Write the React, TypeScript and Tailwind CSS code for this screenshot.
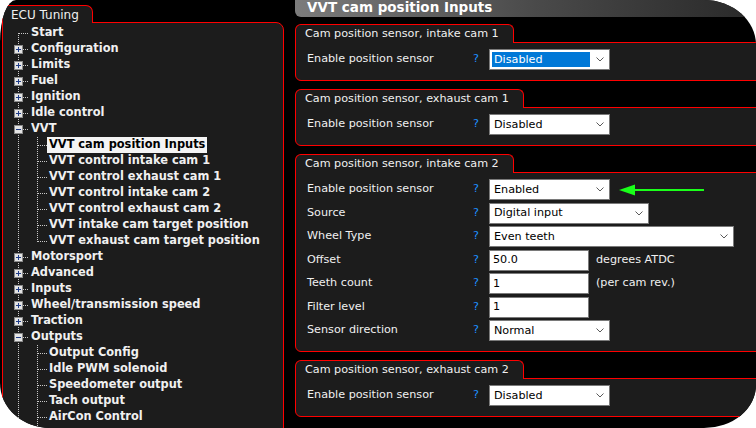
import React from "react";

type TreeNode = {
  label: string;
  level: 0 | 1;
  kind: "plus" | "minus" | "leaf";
  first?: boolean;
  last?: boolean;
  selected?: boolean;
};

const tree: TreeNode[] = [
  { label: "Start", level: 0, kind: "leaf", first: true },
  { label: "Configuration", level: 0, kind: "plus" },
  { label: "Limits", level: 0, kind: "plus" },
  { label: "Fuel", level: 0, kind: "plus" },
  { label: "Ignition", level: 0, kind: "plus" },
  { label: "Idle control", level: 0, kind: "plus" },
  { label: "VVT", level: 0, kind: "minus" },
  { label: "VVT cam position Inputs", level: 1, kind: "leaf", selected: true },
  { label: "VVT control intake cam 1", level: 1, kind: "leaf" },
  { label: "VVT control exhaust cam 1", level: 1, kind: "leaf" },
  { label: "VVT control intake cam 2", level: 1, kind: "leaf" },
  { label: "VVT control exhaust cam 2", level: 1, kind: "leaf" },
  { label: "VVT intake cam target position", level: 1, kind: "leaf" },
  { label: "VVT exhaust cam target position", level: 1, kind: "leaf", last: true },
  { label: "Motorsport", level: 0, kind: "plus" },
  { label: "Advanced", level: 0, kind: "plus" },
  { label: "Inputs", level: 0, kind: "plus" },
  { label: "Wheel/transmission speed", level: 0, kind: "plus" },
  { label: "Traction", level: 0, kind: "plus" },
  { label: "Outputs", level: 0, kind: "minus" },
  { label: "Output Config", level: 1, kind: "leaf" },
  { label: "Idle PWM solenoid", level: 1, kind: "leaf" },
  { label: "Speedometer output", level: 1, kind: "leaf" },
  { label: "Tach output", level: 1, kind: "leaf" },
  { label: "AirCon Control", level: 1, kind: "leaf" },
];

const DOT = "#c8c8c8";

function Gutter({ n }: { n: TreeNode }) {
  const w = n.level === 0 ? 27 : 44;
  return (
    <svg width={w} height={16} shapeRendering="crispEdges" className="shrink-0">
      <line x1={15.5} y1={n.first ? 8 : 0} x2={15.5} y2={16} stroke={DOT} strokeDasharray="1 1" />
      {n.level === 0 && <line x1={16} y1={8.5} x2={26} y2={8.5} stroke={DOT} strokeDasharray="1 1" />}
      {n.level === 1 && (
        <>
          <line x1={34.5} y1={0} x2={34.5} y2={n.last ? 9 : 16} stroke={DOT} strokeDasharray="1 1" />
          <line x1={35} y1={8.5} x2={44} y2={8.5} stroke={DOT} strokeDasharray="1 1" />
        </>
      )}
      {n.kind !== "leaf" && (
        <>
          <rect x={11.5} y={4.5} width={8} height={8} fill="#e4e4e4" stroke="#8a8a8a" />
          <line x1={13} y1={8.5} x2={18} y2={8.5} stroke="#1f3c88" />
          {n.kind === "plus" && <line x1={15.5} y1={6} x2={15.5} y2={11} stroke="#1f3c88" />}
        </>
      )}
    </svg>
  );
}

function Chevron() {
  return (
    <svg width={8} height={5} className="ml-auto mr-[5px] shrink-0">
      <polyline points="0.5,0.5 4,4 7.5,0.5" fill="none" stroke="#5a5a5a" strokeWidth={1} />
    </svg>
  );
}

function Select({ value, w, focused }: { value: string; w: string; focused?: boolean }) {
  return (
    <div className={`${w} h-[21px] border border-[#7a7a7a] bg-white flex items-center text-black shrink-0`}>
      {focused ? (
        <span className="ml-[2px] h-[15px] w-[98px] bg-[#0078d7] text-white pl-[2px] flex items-center leading-none">
          {value}
        </span>
      ) : (
        <span className="pl-[4px] leading-none">{value}</span>
      )}
      <Chevron />
    </div>
  );
}

function TextBox({ value }: { value: string }) {
  return (
    <div className="w-[100px] h-[21px] border border-[#7a7a7a] bg-white flex items-center pl-[3px] text-black leading-none shrink-0">
      {value}
    </div>
  );
}

function Row({ label, children }: { label: string; children: React.ReactNode }) {
  return (
    <div className="flex items-center h-[21px]">
      <span className="w-[166px] shrink-0">{label}</span>
      <span className="w-[16px] shrink-0 text-[#1e90ff]">?</span>
      {children}
    </div>
  );
}

function Group({ title, children }: { title: string; children: React.ReactNode }) {
  return (
    <div className="flex flex-col">
      <div className="relative z-10 -mb-px self-start h-[19px] border border-b-0 border-[#f00] rounded-t-[6px] bg-[#1c1c1c] pl-[9px] pr-[14px] flex items-center">
        {title}
      </div>
      <div className="border border-[#f00] rounded-bl-[6px] bg-[#1c1c1c] pt-[6px] pb-[10px] pl-[11px] flex flex-col gap-[2.5px]">
        {children}
      </div>
    </div>
  );
}

export default function App() {
  return (
    <div className="w-[756px] h-[428px] bg-white overflow-hidden">
      <div className="w-full h-full bg-black overflow-hidden rounded-tl-[16px_42px] rounded-tr-[52px_45px] rounded-bl-[50px_45px] rounded-br-[52px_43px] flex pl-[2px] gap-[11px] font-['DejaVu_Sans',sans-serif] text-[11.2px] text-[#f0f0f0]">
        {/* tree side */}
        <div className="w-[282px] shrink-0 flex flex-col pt-[5px]">
          <div className="relative z-10 -mb-px w-[91px] h-[18px] border border-b-0 border-[#f00] rounded-tr-[7px] bg-[#1c1c1c] pl-[8px] flex items-center text-[12px]">
            ECU Tuning
          </div>
          <div className="flex-1 border border-[#f00] rounded-tr-[8px] bg-[#1c1c1c] pt-[2px] font-bold text-[11.4px]">
            {tree.map((n) => (
              <div key={n.label} className="flex h-4 items-center">
                <Gutter n={n} />
                <span
                  className={`h-4 flex items-center whitespace-nowrap ${
                    n.level === 1 ? "px-[2px]" : "px-[1px]"
                  } ${n.selected ? "bg-[#f4f4f4] text-black" : ""}`}
                >
                  {n.label}
                </span>
              </div>
            ))}
            <div className="flex h-4">
              <svg width={44} height={16} shapeRendering="crispEdges" className="shrink-0">
                <line x1={15.5} y1={0} x2={15.5} y2={16} stroke={DOT} strokeDasharray="1 1" />
                <line x1={34.5} y1={0} x2={34.5} y2={16} stroke={DOT} strokeDasharray="1 1" />
              </svg>
            </div>
          </div>
        </div>

        {/* settings side */}
        <div className="w-[480px] shrink-0 flex flex-col">
          <div className="h-[17px] shrink-0 bg-gradient-to-r from-[#7c7c7c] via-[#4a4a4a] to-[#262626] rounded-bl-[6px] pl-[12px] pb-[2px] flex items-center text-white font-bold text-[13.5px]">
            VVT cam position Inputs
          </div>
          <div className="mt-[7px] flex flex-col gap-[8px]">
            <Group title="Cam position sensor, intake cam 1">
              <Row label="Enable position sensor">
                <Select value="Disabled" w="w-[121px]" focused />
              </Row>
            </Group>
            <Group title="Cam position sensor, exhaust cam 1">
              <Row label="Enable position sensor">
                <Select value="Disabled" w="w-[121px]" />
              </Row>
            </Group>
            <Group title="Cam position sensor, intake cam 2">
              <Row label="Enable position sensor">
                <Select value="Enabled" w="w-[121px]" />
                <svg width={86} height={12} className="ml-[9px] shrink-0">
                  <polygon points="0,6 16,0.5 16,11.5" fill="#1aff1a" />
                  <rect x={15} y={5} width={70} height={2} fill="#1aff1a" />
                </svg>
              </Row>
              <Row label="Source">
                <Select value="Digital input" w="w-[160px]" />
              </Row>
              <Row label="Wheel Type">
                <Select value="Even teeth" w="w-[245px]" />
              </Row>
              <Row label="Offset">
                <TextBox value="50.0" />
                <span className="ml-[7px]">degrees ATDC</span>
              </Row>
              <Row label="Teeth count">
                <TextBox value="1" />
                <span className="ml-[7px]">(per cam rev.)</span>
              </Row>
              <Row label="Filter level">
                <TextBox value="1" />
              </Row>
              <Row label="Sensor direction">
                <Select value="Normal" w="w-[121px]" />
              </Row>
            </Group>
            <Group title="Cam position sensor, exhaust cam 2">
              <Row label="Enable position sensor">
                <Select value="Disabled" w="w-[121px]" />
              </Row>
            </Group>
          </div>
        </div>
      </div>
    </div>
  );
}
